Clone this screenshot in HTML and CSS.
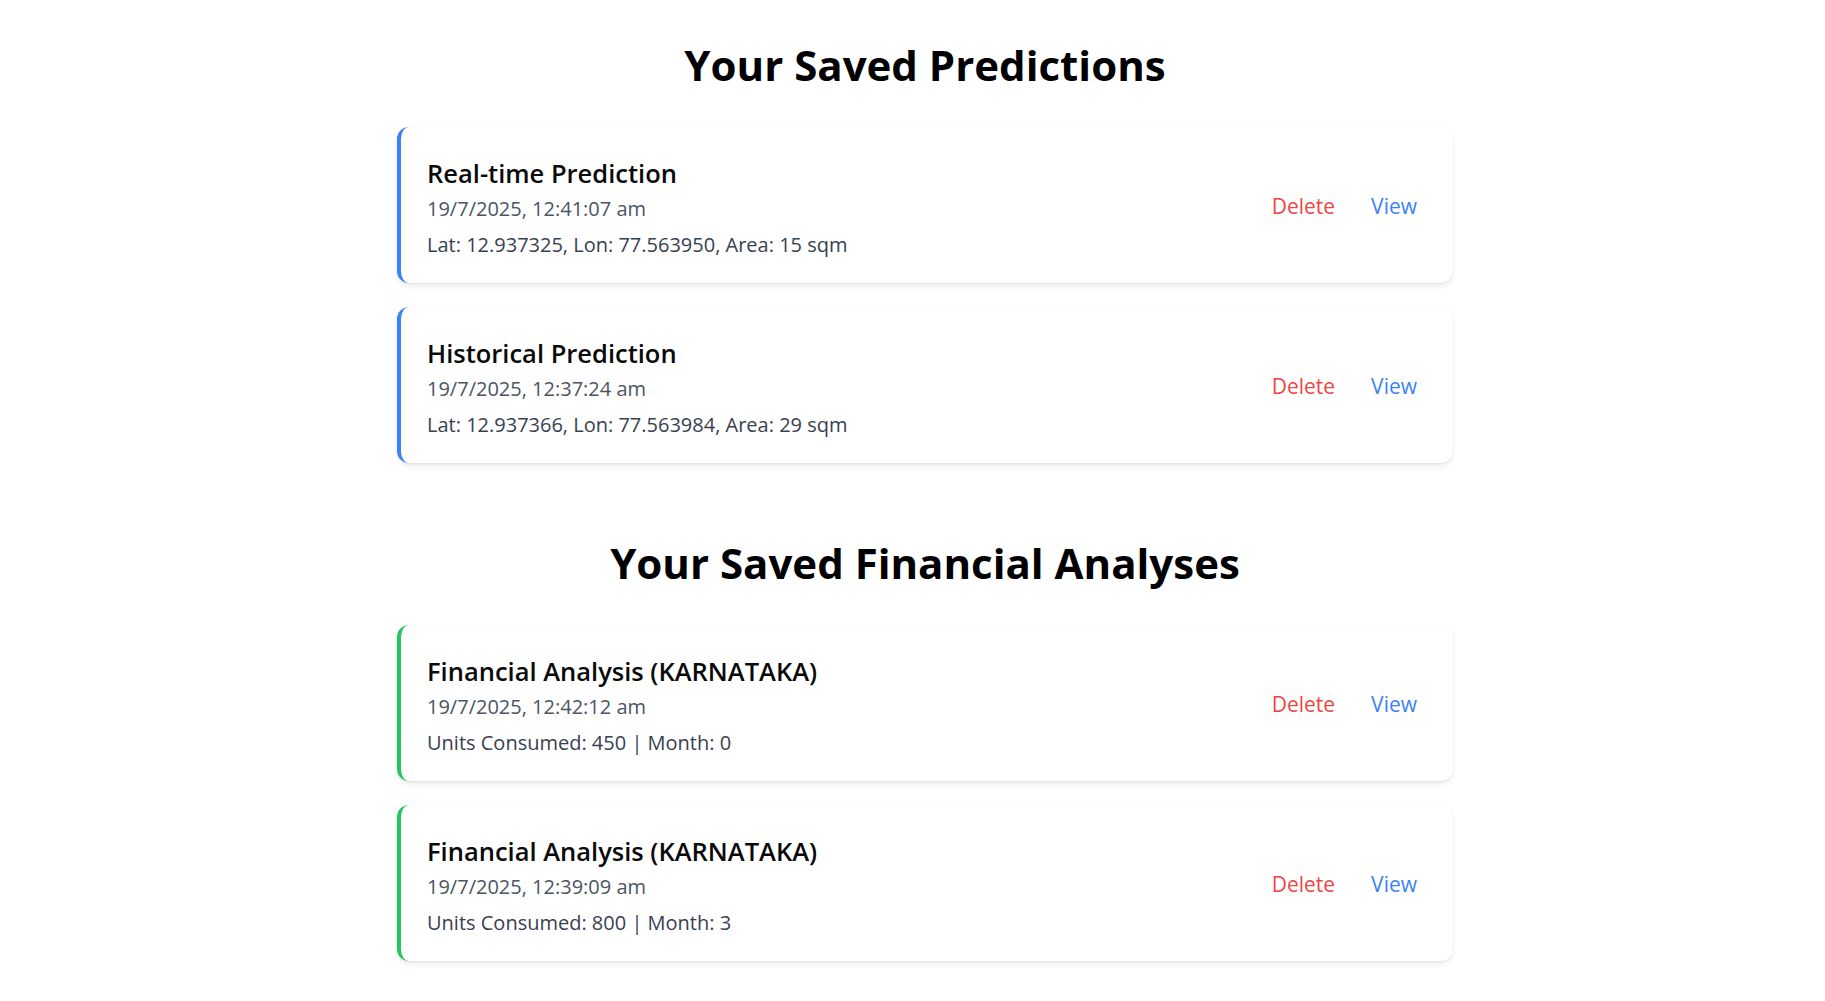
FILE: index.html
```html
<!DOCTYPE html>
<html lang="en">
<head>
<meta charset="utf-8">
<title>Saved Items</title>
<link rel="stylesheet" href="styles.css">
</head>
<body>
<main class="page">
  <section class="section">
    <h1 class="section-title">Your Saved Predictions</h1>
    <div class="list">
      <div class="card card-blue">
        <div class="card-info">
          <div class="card-title">Real-time Prediction</div>
          <div class="card-date">19/7/2025, 12:41:07 am</div>
          <div class="card-meta">Lat: 12.937325, Lon: 77.563950, Area: 15 sqm</div>
        </div>
        <div class="card-actions">
          <button class="btn btn-delete">Delete</button>
          <button class="btn btn-view">View</button>
        </div>
      </div>
      <div class="card card-blue">
        <div class="card-info">
          <div class="card-title">Historical Prediction</div>
          <div class="card-date">19/7/2025, 12:37:24 am</div>
          <div class="card-meta">Lat: 12.937366, Lon: 77.563984, Area: 29 sqm</div>
        </div>
        <div class="card-actions">
          <button class="btn btn-delete">Delete</button>
          <button class="btn btn-view">View</button>
        </div>
      </div>
    </div>
  </section>
  <section class="section section-second">
    <h2 class="section-title">Your Saved Financial Analyses</h2>
    <div class="list">
      <div class="card card-green">
        <div class="card-info">
          <div class="card-title">Financial Analysis (KARNATAKA)</div>
          <div class="card-date">19/7/2025, 12:42:12 am</div>
          <div class="card-meta">Units Consumed: 450 | Month: 0</div>
        </div>
        <div class="card-actions">
          <button class="btn btn-delete">Delete</button>
          <button class="btn btn-view">View</button>
        </div>
      </div>
      <div class="card card-green">
        <div class="card-info">
          <div class="card-title">Financial Analysis (KARNATAKA)</div>
          <div class="card-date">19/7/2025, 12:39:09 am</div>
          <div class="card-meta">Units Consumed: 800 | Month: 3</div>
        </div>
        <div class="card-actions">
          <button class="btn btn-delete">Delete</button>
          <button class="btn btn-view">View</button>
        </div>
      </div>
    </div>
  </section>
</main>
</body>
</html>
```

FILE: styles.css
```css
* { box-sizing: border-box; }
html, body { margin: 0; padding: 0; background: #ffffff; }
body {
  font-family: "Open Sans", "Noto Sans", sans-serif;
  color: #111827;
  padding-left: 25px;
}
.page {
  width: 1056px;
  margin: 0 auto;
  padding-top: 37px;
  padding-bottom: 40px;
}
.section-second { margin-top: 72px; }
.section-title {
  margin: 0 0 34px 0;
  text-align: center;
  font-size: 42px;
  line-height: 56px;
  font-weight: 700;
  color: #000;
}
.list {
  display: flex;
  flex-direction: column;
  gap: 24px;
}
.card {
  display: flex;
  align-items: center;
  justify-content: space-between;
  height: 156px;
  padding: 30px 24px 24px 26px;
  background: #fff;
  border-radius: 12px;
  border-left: 4px solid #3b82f6;
  box-shadow: 0 4px 6px -1px rgba(0,0,0,0.08), 0 2px 4px -2px rgba(0,0,0,0.06), 0 0 0 1px rgba(0,0,0,0.02);
}
.card-green { border-left-color: #22c55e; }
.card-info { display: flex; flex-direction: column; align-self: flex-start; }
.card-title {
  font-size: 25.5px;
  line-height: 32px;
  font-weight: 600;
  color: #0a0a0a;
}
.card-date {
  margin-top: 6px;
  font-size: 20px;
  line-height: 28px;
  color: #4b5563;
}
.card-meta {
  margin-top: 8px;
  font-size: 20px;
  line-height: 28px;
  color: #374151;
}
.card-actions {
  display: flex;
  gap: 12px;
  margin-top: -4px;
}
.btn {
  border: none;
  background: none;
  padding: 4px 12px;
  font-family: inherit;
  font-size: 21px;
  line-height: 28px;
  font-weight: 500;
  cursor: pointer;
}
.btn-delete { color: #ef4444; }
.btn-view { color: #3b82f6; }
```
